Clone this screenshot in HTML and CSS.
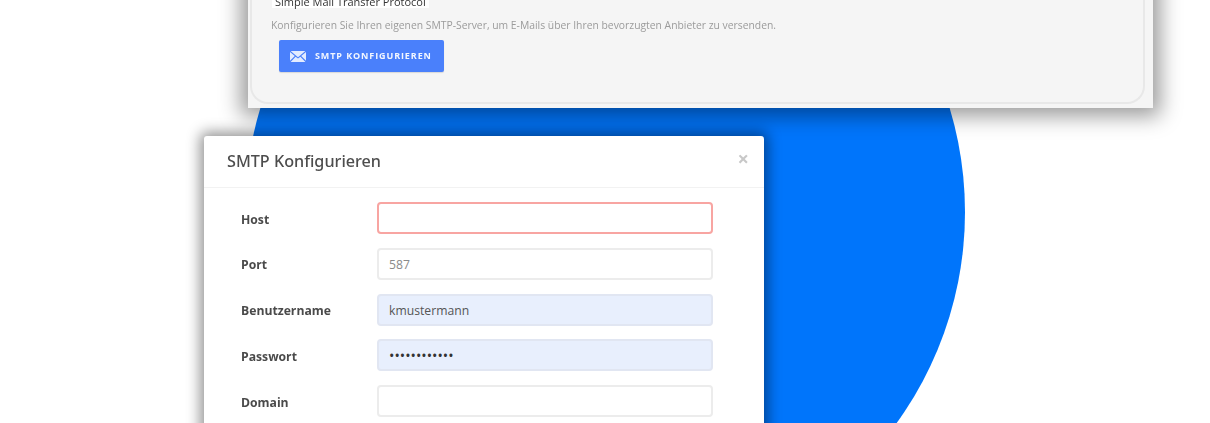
FILE: index.html
```html
<!DOCTYPE html>
<html lang="de">
<head>
<meta charset="utf-8">
<title>SMTP Konfigurieren</title>
<link rel="stylesheet" href="styles.css">
</head>
<body>
<div class="canvas">
  <div class="circle"></div>
  <section class="window">
    <div class="panel">
      <h3 class="panel-title">Simple Mail Transfer Protocol</h3>
      <p class="panel-text">Konfigurieren Sie Ihren eigenen SMTP-Server, um E-Mails über Ihren bevorzugten Anbieter zu versenden.</p>
      <button class="smtp-btn" type="button">
        <svg class="mail-icon" width="16" height="11" viewBox="0 0 16 11" aria-hidden="true">
          <path fill="#e3ecff" d="M0.6 0h14.8L8 6.2z"/>
          <path fill="#e3ecff" d="M0 1l4.8 4L0 9.8zM16 1l-4.8 4L16 9.8zM5.6 5.7L8 7.6l2.4-1.9 5 5.3H0.6z"/>
        </svg>
        <span>SMTP KONFIGURIEREN</span>
      </button>
    </div>
  </section>
  <section class="modal">
    <header class="modal-head">
      <h2 class="modal-title">SMTP Konfigurieren</h2>
      <span class="close">×</span>
    </header>
    <form class="modal-body">
      <div class="row"><label class="lbl">Host</label><div class="field invalid"></div></div>
      <div class="row"><label class="lbl">Port</label><div class="field muted">587</div></div>
      <div class="row"><label class="lbl">Benutzername</label><div class="field filled">kmustermann</div></div>
      <div class="row"><label class="lbl">Passwort</label><div class="field filled dots">••••••••••••</div></div>
      <div class="row"><label class="lbl">Domain</label><div class="field"></div></div>
    </form>
  </section>
</div>
</body>
</html>
```
FILE: styles.css
```css
html, body { margin: 0; padding: 0; background: #fff; }
body { width: 1210px; height: 423px; overflow: hidden; font-family: "Open Sans", "Noto Sans", sans-serif; }
.canvas { position: relative; width: 1210px; height: 423px; overflow: hidden; }

.circle {
  position: absolute; left: 245px; top: -148px;
  width: 720px; height: 720px; border-radius: 50%;
  background: #0075fb;
}

.window {
  position: absolute; left: 248px; top: -60px;
  width: 905px; height: 168px; box-sizing: border-box;
  background: #f5f5f5;
  box-shadow: 0 1px 20px 7px rgba(0,0,0,.4);
  padding: 0 8px 4px 2px;
  display: flex;
}
.panel {
  flex: 1; border: 2px solid #e8e8e8; border-top: 0;
  border-radius: 0 0 18px 18px;
  padding: 49px 20px 0 19px;
}
.panel-title {
  display: inline-block; margin: 0 0 0 1px; padding: 0 3px;
  background: #fff; color: #333; font-size: 11px; font-weight: 400;
  line-height: 12px; filter: blur(.4px);
}
.panel-text { margin: 7px 0 0; color: #9b9b9b; font-size: 10.35px; line-height: 14px; white-space: nowrap; filter: blur(.4px); }
.smtp-btn {
  display: flex; align-items: center; gap: 9px;
  width: 165px; height: 32px; margin: 8px 0 0 8px; padding: 0 0 0 11px;
  background: #4a80fb; border: 0; border-radius: 2px; color: #f2f6ff;
  font-family: inherit; font-size: 9px; font-weight: 700; letter-spacing: .9px;
  box-shadow: 0 1px 1px rgba(0,0,0,.12);
}
.mail-icon { flex: none; margin-top: 1px; filter: blur(.4px); }
.smtp-btn span { margin-top: -2px; filter: blur(.3px); }

.modal {
  position: absolute; left: 204px; top: 136px;
  width: 560px; height: 320px;
  background: #fff; border-radius: 3px;
  box-shadow: 0 0 14px 4px rgba(0,0,0,.42);
}
.modal-head {
  position: relative; height: 52px; box-sizing: border-box;
  border-bottom: 1px solid #f2f2f2; padding: 13px 23px 0;
}
.modal-title { margin: 0; color: #4d4d4d; font-family: "Noto Sans", sans-serif; font-size: 16.2px; font-weight: 500; line-height: 24px; filter: blur(.4px); }
.close { position: absolute; right: 15px; top: 11px; color: #c8c8c8; font-size: 20px; line-height: 24px; font-weight: 700; filter: blur(.3px); }
.modal-body { display: flex; flex-direction: column; gap: 13.75px; padding: 14px 0 0 37px; }
.row { display: flex; align-items: center; height: 32px; }
.lbl { width: 136px; padding-top: 2px; color: #4a4a4a; font-size: 12.2px; font-weight: 700; filter: blur(.35px); }
.field {
  width: 336px; height: 32px; box-sizing: border-box;
  border: 2px solid #ececec; border-radius: 4px; padding: 0 10px;
  color: #555; font-size: 12.2px; line-height: 29px;
}
.invalid { border-color: #f8a5a2; }
.muted { color: #8a8a8a; }
.filled { background: #e8effd; border-color: #e1e6f2; }
.dots { color: #333; font-size: 14.3px; letter-spacing: 0; }
```
